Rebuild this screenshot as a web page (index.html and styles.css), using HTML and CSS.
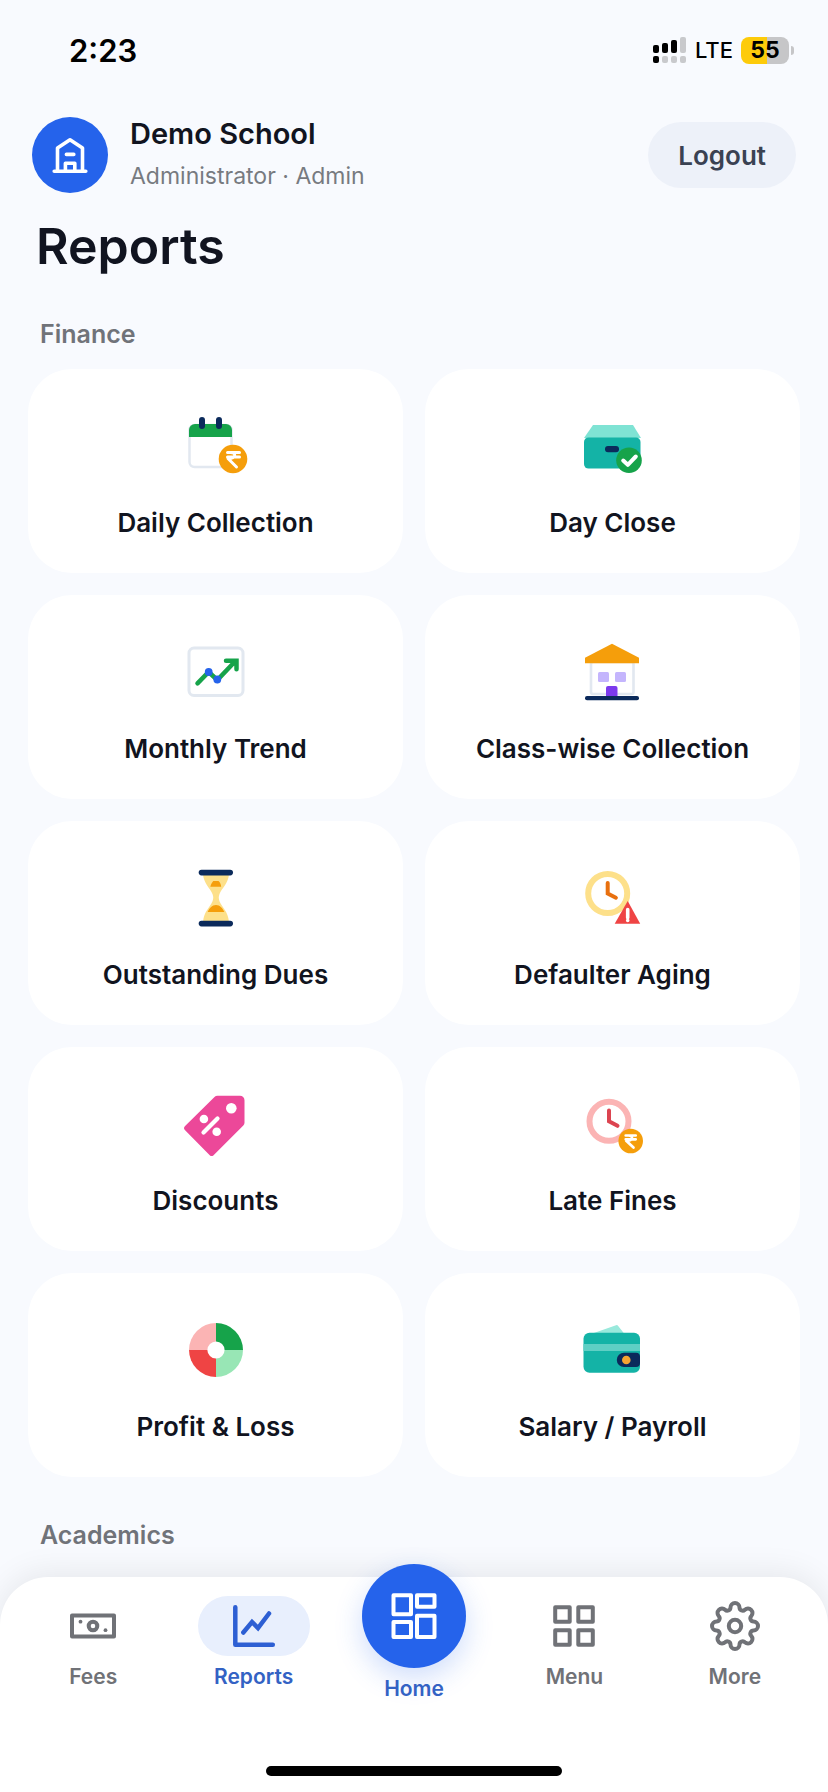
FILE: index.html
```html
<!DOCTYPE html>
<html lang="en">
  <head>
    <meta charset="UTF-8" />
    <meta name="viewport" content="width=device-width, initial-scale=1.0" />
    <title>Reports</title>
    <link rel="stylesheet" href="styles.css">
  </head>
  <body>
    <div class="status-bar">
      <span class="time">2:23</span>
      <div class="status-right">
        <svg class="signal" width="34" height="28" viewBox="0 0 34 28" aria-hidden="true">
          <rect x="0" y="9" width="6" height="8" rx="2" />
          <rect x="9" y="7" width="6" height="10" rx="2" />
          <rect x="18" y="4" width="6" height="13" rx="2" />
          <rect class="off" x="27" y="1" width="6" height="16" rx="2" />
          <rect x="0" y="20" width="6" height="7" rx="2" />
          <rect class="off" x="9" y="20" width="6" height="7" rx="2" />
          <rect class="off" x="18" y="20" width="6" height="7" rx="2" />
          <rect class="off" x="27" y="20" width="6" height="7" rx="2" />
        </svg>
        <span class="network">LTE</span>
        <span class="battery">55</span>
      </div>
    </div>

    <header class="header">
      <div class="avatar">
        <svg width="36" height="36" viewBox="0 0 36 36" fill="none" stroke="#fff" stroke-width="3.6" stroke-linejoin="round" stroke-linecap="round">
          <path d="M5.5 34.200V11L18 2.800 30.500 11v23.200M2.200 34.200h31.600M14.400 17.400h7.400" />
          <path d="M13.400 34V26.200h9.400V34" />
        </svg>
      </div>
      <div class="user">
        <div class="user-name">Demo School</div>
        <div class="user-role">Administrator · Admin</div>
      </div>
      <button type="button" class="logout">Logout</button>
    </header>

    <main class="content">
      <h1>Reports</h1>

      <h2>Finance</h2>
      <div class="grid">
        <a href="#" class="card">
          <svg width="64" height="64" viewBox="0 0 64 64" fill="none">
            <rect x="5.5" y="11" width="42" height="42" rx="5" fill="#fff" stroke="#e2e8f0" stroke-width="2.5" />
            <path d="M5 23v-7a6 6 0 0 1 6-6h31a6 6 0 0 1 6 6v7z" fill="#16a34a" />
            <path d="M18 6v6M35 6v6" stroke="#0b2a5b" stroke-width="6" stroke-linecap="round" />
            <circle cx="49" cy="45" r="14.3" fill="#f59e0b" />
            <path d="M43.5 38.5h12M43.500 43h12M46.500 38.500c6 0 6 6-2.500 6L52.500 53" stroke="#fff" stroke-width="3" stroke-linecap="round" stroke-linejoin="round" />
          </svg>
          <span>Daily Collection</span>
        </a>
        <a href="#" class="card">
          <svg width="64" height="64" viewBox="0 0 64 64" fill="none">
            <path d="M12 11h40l8 13H3z" fill="#7fe3d4" />
            <rect x="3" y="23.5" width="56.5" height="31" rx="4.5" fill="#14b3a6" />
            <rect x="24" y="32" width="14" height="6.3" rx="3" fill="#0b2a5b" />
            <circle cx="48" cy="46.3" r="12.8" fill="#16a34a" />
            <path d="M42.200 46.500l4.600 4.300 8-8.300" stroke="#fff" stroke-width="4" stroke-linecap="round" stroke-linejoin="round" />
          </svg>
          <span>Day Close</span>
        </a>
        <a href="#" class="card">
          <svg width="64" height="64" viewBox="0 0 64 64" fill="none">
            <rect x="5" y="8" width="54" height="47.5" rx="5" fill="#fff" stroke="#e2e8f0" stroke-width="3" />
            <path d="M13.500 43.300L24.700 32l8.600 8L51 21.500M42 20.700h10.500v8.500" stroke="#16a34a" stroke-width="4.5" stroke-linecap="round" />
            <circle cx="24.7" cy="32" r="3.9" fill="#2563eb" />
            <circle cx="33.3" cy="39.5" r="3.9" fill="#2563eb" />
          </svg>
          <span>Monthly Trend</span>
        </a>
        <a href="#" class="card">
          <svg width="64" height="64" viewBox="0 0 64 64" fill="none">
            <rect x="10" y="22" width="42.5" height="32" rx="2" fill="#fff" stroke="#e2e8f0" stroke-width="2.6" />
            <path d="M4 23.300v-5.600l27-14 27 14v5.600z" fill="#f59e0b" />
            <rect x="17" y="32" width="11" height="10" rx="1.5" fill="#c4b5fd" />
            <rect x="34" y="32" width="11" height="10" rx="1.5" fill="#c4b5fd" />
            <path d="M25 57v-9a2 2 0 0 1 2-2h7.500a2 2 0 0 1 2 2v9z" fill="#7c3aed" />
            <rect x="4" y="56" width="54" height="4.3" rx="2" fill="#0b2a5b" />
          </svg>
          <span>Class-wise Collection</span>
        </a>
        <a href="#" class="card">
          <svg width="64" height="64" viewBox="0 0 64 64" fill="none">
            <path d="M19 8h26c-.5 9-7 14-9.500 20-1 2.700-1 4.500 0 7.200C38 41.500 44 45 45 56H19c1-11 7-14.500 9.500-20.800 1-2.700 1-4.500 0-7.200C26 22 19.500 17 19 8z" fill="#fde08a" />
            <path d="M26.300 20.700c.7-3 2-4.500 3-5.700h5.200c1.500 1.200 2.300 3 2.700 5.700zM23.700 46c1.300-3.500 4.500-7 8.300-7s7 3.500 8.300 7z" fill="#f59e0b" />
            <rect x="14.700" y="3.7" width="34.3" height="5.7" rx="2.8" fill="#0b2a5b" />
            <rect x="14.700" y="54.7" width="34.3" height="5.7" rx="2.8" fill="#0b2a5b" />
          </svg>
          <span>Outstanding Dues</span>
        </a>
        <a href="#" class="card">
          <svg width="64" height="64" viewBox="0 0 64 64" fill="none">
            <circle cx="26.7" cy="27.5" r="19.5" stroke="#fde08a" stroke-width="6" />
            <path d="M26.700 17v10.500l8.200 4.200" stroke="#e8700f" stroke-width="4" stroke-linecap="round" />
            <path d="M46.700 35L59.200 57.700H33.700z" fill="#ef4444" />
            <path d="M46.700 43.500v8.300M46.700 54.300v.2" stroke="#fff" stroke-width="3.6" stroke-linecap="round" />
          </svg>
          <span>Defaulter Aging</span>
        </a>
        <a href="#" class="card">
          <svg width="64" height="64" viewBox="0 0 64 64" fill="none">
            <path d="M33.500 3.700H56a4.500 4.500 0 0 1 4.500 4.500v22.500a4 4 0 0 1-1.200 2.800L29.800 63a3 3 0 0 1-4.300 0L1.100 38.200a3 3 0 0 1 0-4.300L30.500 5a4.500 4.500 0 0 1 3-1.300z" fill="#ec4899" />
            <circle cx="47.3" cy="16.3" r="5.3" fill="#fff" />
            <circle cx="19.9" cy="27" r="4.3" fill="#fff" />
            <circle cx="32.7" cy="39.7" r="4.3" fill="#fff" />
            <path d="M19.500 40.500l14-14" stroke="#fff" stroke-width="4.2" stroke-linecap="round" />
          </svg>
          <span>Discounts</span>
        </a>
        <a href="#" class="card">
          <svg width="64" height="64" viewBox="0 0 64 64" fill="none">
            <circle cx="28" cy="29.3" r="19.5" stroke="#fbb4b4" stroke-width="6" />
            <path d="M28 18.500v10.800l8.500 4.500" stroke="#dc4450" stroke-width="4" stroke-linecap="round" />
            <circle cx="49.7" cy="49" r="12.3" fill="#f59e0b" />
            <path d="M44.700 43.500h10M44.700 47.300h10M47.500 43.500c5 0 5 5.200-2.300 5.200L52.500 55.500" stroke="#fff" stroke-width="2.7" stroke-linecap="round" stroke-linejoin="round" />
          </svg>
          <span>Late Fines</span>
        </a>
        <a href="#" class="card">
          <svg width="64" height="64" viewBox="0 0 64 64" fill="none">
            <path d="M32 32V5a27 27 0 0 1 27 27z" fill="#16a34a" />
            <path d="M32 32h27a27 27 0 0 1-27 27z" fill="#98e6b5" />
            <path d="M32 32v27A27 27 0 0 1 5 32z" fill="#ef4444" />
            <path d="M32 32H5A27 27 0 0 1 32 5z" fill="#fbb4b4" />
            <circle cx="32" cy="32" r="8.6" fill="#fff" />
          </svg>
          <span>Profit &amp; Loss</span>
        </a>
        <a href="#" class="card">
          <svg width="64" height="64" viewBox="0 0 64 64" fill="none">
            <path d="M10 16L35 7.200a2 2 0 0 1 2.200.7L43.500 16z" fill="#99e9dc" />
            <rect x="2.5" y="14.7" width="56.5" height="40" rx="6" fill="#14b3a6" />
            <path d="M2.500 26H59v7H2.500z" fill="#5fcfc4" />
            <path d="M43 34.700h12a4 4 0 0 1 4 4v6.400a4 4 0 0 1-4 4H43a7.200 7.200 0 0 1 0-14.400z" fill="#0b2a5b" />
            <circle cx="45.3" cy="42" r="4.3" fill="#f5a431" />
          </svg>
          <span>Salary / Payroll</span>
        </a>
      </div>

      <h2>Academics</h2>
    </main>

    <nav class="tab-bar">
      <div class="tabs">
        <a href="#" class="tab">
          <span class="tab-icon">
            <svg width="46" height="46" viewBox="0 0 46 46" fill="none" stroke="currentColor" stroke-width="4">
              <rect x="2" y="12.5" width="42" height="21" stroke-linejoin="round" />
              <circle cx="23" cy="23" r="4.3" />
              <g fill="currentColor" stroke="none">
                <circle cx="10.5" cy="18.7" r="1.900" />
                <circle cx="35.5" cy="27.2" r="1.900" />
              </g>
            </svg>
          </span>
          Fees
        </a>
        <a href="#" class="tab active">
          <span class="tab-icon">
            <svg width="44" height="44" viewBox="0 0 44 44" fill="none" stroke="currentColor" stroke-width="4.5" stroke-linecap="round" stroke-linejoin="round">
              <path d="M3.300 3.300v37.500h37.500" />
              <path d="M11.300 28.500L20 18l6 6 11-14.500" stroke-linejoin="miter" />
            </svg>
          </span>
          Reports
        </a>
        <a href="#" class="tab home">
          <span class="home-icon">
            <svg width="46" height="46" viewBox="0 0 46 46" fill="none" stroke="#fff" stroke-width="4" stroke-linejoin="round">
              <rect x="2.5" y="2.3" width="17.5" height="19" />
              <rect x="2.5" y="29" width="17.5" height="15" />
              <rect x="26" y="2.3" width="17.5" height="11.5" />
              <rect x="26" y="22.7" width="17.5" height="21.3" />
            </svg>
          </span>
          Home
        </a>
        <a href="#" class="tab">
          <span class="tab-icon">
            <svg width="42" height="42" viewBox="0 0 42 42" fill="none" stroke="currentColor" stroke-width="4" stroke-linejoin="round">
              <rect x="2.2" y="2.2" width="14.5" height="14.5" />
              <rect x="25.3" y="2.2" width="14.5" height="14.5" />
              <rect x="2.2" y="25.3" width="14.5" height="14.5" />
              <rect x="25.3" y="25.3" width="14.5" height="14.5" />
            </svg>
          </span>
          Menu
        </a>
        <a href="#" class="tab">
          <span class="tab-icon">
            <svg width="50" height="50" viewBox="-25 -25 50 50" fill="none" stroke="currentColor" stroke-width="4">
              <path d="M18.500-4.500A4.500 4.500 0 0 1 18.500 4.500A3.170 3.170 0 0 0 16.260 9.900A4.500 4.500 0 0 1 9.900 16.260A3.170 3.170 0 0 0 4.500 18.500A4.500 4.500 0 0 1-4.500 18.500A3.170 3.170 0 0 0-9.900 16.260A4.500 4.500 0 0 1-16.260 9.900A3.170 3.170 0 0 0-18.500 4.500A4.500 4.500 0 0 1-18.500-4.500A3.170 3.170 0 0 0-16.260-9.900A4.500 4.500 0 0 1-9.900-16.260A3.170 3.170 0 0 0-4.500-18.500A4.500 4.500 0 0 1 4.500-18.500A3.170 3.170 0 0 0 9.900-16.260A4.500 4.500 0 0 1 16.260-9.900A3.170 3.170 0 0 0 18.500-4.500z" />
              <circle r="6.200" />
            </svg>
          </span>
          More
        </a>
      </div>
      <div class="home-indicator"></div>
    </nav>
  </body>
</html>
```

FILE: styles.css
```css
* {
  box-sizing: border-box;
}

body {
  display: flex;
  flex-direction: column;
  min-height: 100vh;
  margin: 0;
  background-color: #f8fafe;
  color: #111420;
  font-family: Inter, "Liberation Sans", sans-serif;
}

a {
  color: inherit;
  text-decoration: none;
}

.status-bar {
  display: flex;
  justify-content: space-between;
  align-items: center;
  height: 100px;
  padding: 0 34px 0 69px;
  color: #000;
}

.time {
  font-size: 31px;
  font-weight: 600;
}

.status-right {
  display: flex;
  align-items: center;
  gap: 8px;
}

.signal .off {
  fill: #c8c9cc;
}

.network {
  font-size: 22px;
  font-weight: 500;
}

.battery {
  position: relative;
  width: 48px;
  margin-right: 5px;
  border-radius: 8px;
  background: linear-gradient(to right, #fdcb0a 55%, #c6c6c8 55%);
  font-size: 23px;
  line-height: 27px;
  font-weight: 700;
  text-align: center;
}

.battery::after {
  content: "";
  position: absolute;
  right: -5px;
  top: 9px;
  width: 3px;
  height: 9px;
  border-radius: 0 4px 4px 0;
  background-color: #c6c6c8;
}

.header {
  display: flex;
  align-items: center;
  padding: 13px 32px 0;
}

.avatar {
  display: flex;
  justify-content: center;
  align-items: center;
  width: 76px;
  height: 76px;
  border-radius: 50%;
  background-color: #2563eb;
}

.user {
  flex: 1;
  margin-left: 22px;
  line-height: 42px;
}

.user-name {
  font-size: 29px;
  font-weight: 600;
}

.user-role {
  color: #777a80;
  font-size: 23px;
}

.logout {
  height: 66px;
  padding: 0 30px;
  border: none;
  border-radius: 33px;
  background-color: #edf1f9;
  color: #3a4252;
  font-family: inherit;
  font-size: 26px;
  font-weight: 600;
}

.content {
  padding: 0 28px;
}

h1 {
  margin: 19px 8px 0;
  font-size: 50px;
  line-height: 60px;
  font-weight: 600;
}

h2 {
  margin: 42px 12px 19px;
  color: #707379;
  font-size: 25px;
  line-height: 32px;
  font-weight: 600;
}

.grid {
  display: grid;
  grid-template-columns: 1fr 1fr;
  gap: 22px;
}

.card {
  display: flex;
  flex-direction: column;
  align-items: center;
  gap: 29px;
  padding: 45px 16px 34px;
  border-radius: 44px;
  background-color: #fff;
  font-size: 26px;
  line-height: 32px;
  font-weight: 600;
}

.tab-bar {
  margin-top: auto;
  padding: 19px 13px 16px;
  border-radius: 48px 48px 0 0;
  background-color: #fff;
  box-shadow: 0 -4px 32px rgba(0, 0, 0, 0.08);
}

.tabs {
  display: flex;
  height: 170px;
}

.tab {
  display: flex;
  flex: 1;
  flex-direction: column;
  align-items: center;
  gap: 9px;
  color: #707277;
  font-size: 21px;
  line-height: 24px;
  font-weight: 600;
}

.tab-icon {
  display: flex;
  justify-content: center;
  align-items: center;
  width: 112px;
  height: 60px;
  border-radius: 30px;
}

.active,
.home {
  color: #3362c4;
}

.active .tab-icon {
  background-color: #e8effd;
  color: #2d5fd3;
}

.home {
  margin-top: -32px;
}

.home-icon {
  display: flex;
  justify-content: center;
  align-items: center;
  width: 104px;
  height: 104px;
  border-radius: 50%;
  background-color: #2563eb;
  box-shadow: 0 10px 28px rgba(37, 99, 235, 0.22);
}

.home-indicator {
  width: 296px;
  height: 10px;
  margin: 0 auto;
  border-radius: 5px;
  background-color: #000;
}
```
